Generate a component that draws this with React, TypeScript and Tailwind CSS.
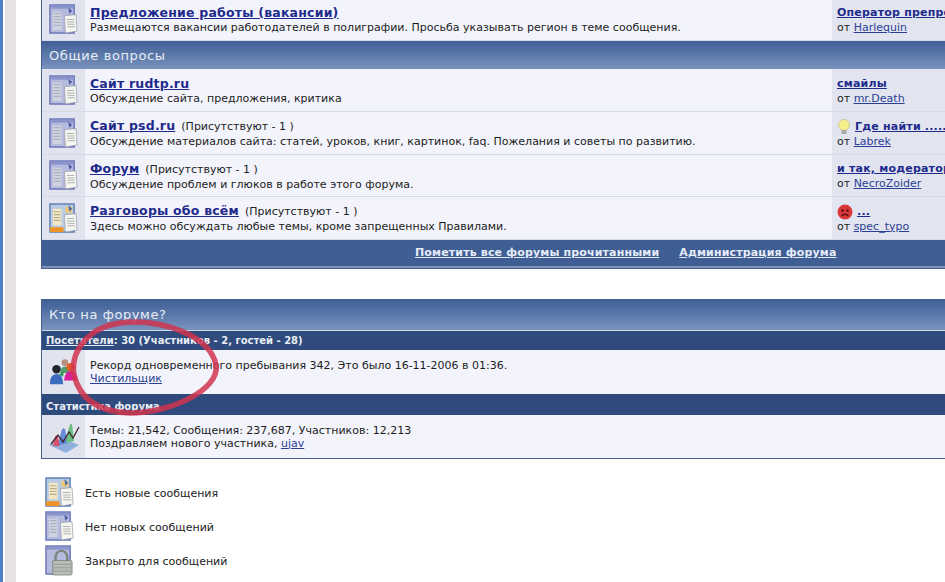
import React from 'react';

type IconProps = { className?: string };

const PaperSheet = ({ x = 15, y = 11 }: { x?: number; y?: number }) => (
  <g transform={`translate(${x} ${y})`}>
    <path d="M1 1 L13 0 L14 17 L2 19 Z" fill="#f6f6f0" stroke="#9497a6" strokeWidth="0.7" />
    <path d="M3.500 5 H11 M3.500 7.500 H11.500 M4 10 H11.500 M4 12.500 H12" stroke="#b0b3b4" strokeWidth="1.100" />
  </g>
);

// синяя папка с листом: нет новых сообщений
const FolderIcon = ({ className }: IconProps) => (
  <svg viewBox="0 0 30 32" className={className}>
    <rect x="1" y="1" width="25" height="29" fill="#b4bbdc" stroke="#6a74b8" strokeWidth="1.500" />
    <rect x="1.800" y="1.800" width="23.400" height="3" fill="#8a95cc" />
    <path d="M4 8 H13 V27 H4 Z" fill="#d0d3e0" />
    <path d="M5 10 H12 M5 13 H12 M5 16 H12 M5 19 H12 M5 22 H12" stroke="#acafc2" strokeWidth="1.200" />
    <path d="M20 4 L24 7 L21 10 Z" fill="#4c5aa0" />
    <PaperSheet />
  </svg>
);

// папка с оранжевым уголком: есть новые сообщения
const NewFolderIcon = ({ className }: IconProps) => (
  <svg viewBox="0 0 30 32" className={className}>
    <rect x="1" y="1" width="25" height="29" fill="#b8cbe2" stroke="#5d7fb4" strokeWidth="1.500" />
    <path d="M4 6 H13 V23 H4 Z" fill="#f2e8c8" />
    <path d="M5 9 H12 M5 12 H12 M5 15 H12 M5 18 H12" stroke="#b6ab8c" strokeWidth="1.200" />
    <path d="M1 25 H15 V30 H1 Z" fill="#ef9326" />
    <path d="M17 4 H24 V10 H17 Z" fill="#ecc876" />
    <path d="M20 2 L24 6 L21 9 Z" fill="#4b6aa5" />
    <PaperSheet />
  </svg>
);

const LockedIcon = ({ className }: IconProps) => (
  <svg viewBox="0 0 30 32" className={className}>
    <rect x="1" y="1" width="25" height="29" fill="#b4bbdc" stroke="#6a74b8" strokeWidth="1.500" />
    <rect x="1.800" y="1.800" width="23.400" height="3" fill="#8a95cc" />
    <path d="M11 17 V12 A6 6 0 0 1 23 12 V17" fill="none" stroke="#7d8580" strokeWidth="2.500" />
    <rect x="8" y="16" width="20" height="15" rx="1.500" fill="#b8bdb8" stroke="#767d77" strokeWidth="0.800" />
    <path d="M9 20 H27 M9 23.500 H27 M9 27 H27" stroke="#959b95" strokeWidth="1" />
  </svg>
);

const UsersIcon = ({ className }: IconProps) => (
  <svg viewBox="0 0 32 32" className={className}>
    <circle cx="17" cy="6" r="3.500" fill="#b78f7e" />
    <path d="M12 17 Q12 10 17 10 Q22 10 22 17 Z" fill="#4f9c6c" />
    <circle cx="8" cy="13" r="4.500" fill="#20242c" />
    <path d="M1 29 Q1 18 8 18 Q15 18 15 29 Z" fill="#3c6cc0" />
    <path d="M10 19 L16 15 L15 21 Z" fill="#2f9a58" />
    <circle cx="23" cy="11" r="4.500" fill="#e35c25" />
    <path d="M16 25 Q17 15 23 15 Q29 15 30 25 Z" fill="#d81f9a" />
  </svg>
);

const StatsIcon = ({ className }: IconProps) => (
  <svg viewBox="0 0 32 32" className={className}>
    <path d="M1 24 L14 17 L31 24 L18 32 Z" fill="#8fb0de" />
    <path d="M5 25 Q7 10 10 16 L12 25 Z" fill="#d8506a" />
    <path d="M11 24 Q13 4 17 8 L20 22 Z" fill="#5a80d8" opacity="0.900" />
    <path d="M18 22 Q21 0 24 3 L26 20 Z" fill="#6dbd82" />
    <path d="M3 23 L10 14 L15 21 L21 11 L25 17 L31 6" fill="none" stroke="#3a2a30" strokeWidth="1.300" />
  </svg>
);

const BulbIcon = () => (
  <svg viewBox="0 0 14 16" className="w-[14px] h-[16px] shrink-0">
    <circle cx="7" cy="6" r="5.500" fill="#f7f08a" stroke="#c9c8a2" />
    <rect x="4.500" y="11" width="5" height="4" fill="#a9a9a0" />
  </svg>
);

const SadIcon = () => (
  <svg viewBox="0 0 16 16" className="w-[16px] h-[16px] shrink-0">
    <circle cx="8" cy="8" r="7.500" fill="#d9383a" />
    <circle cx="5.500" cy="6.500" r="1.200" fill="#5a1010" />
    <circle cx="10.500" cy="6.500" r="1.200" fill="#5a1010" />
    <path d="M4.500 12 Q8 8.500 11.500 12" fill="none" stroke="#5a1010" strokeWidth="1.200" />
  </svg>
);

interface ForumRowProps {
  title: string;
  online?: boolean;
  desc: string;
  lastTitle: string;
  lastBy: string;
  lastIcon?: React.ReactNode;
  isNew?: boolean;
  height: string;
}

const ForumRow: React.FC<ForumRowProps> = ({ title, online, desc, lastTitle, lastBy, lastIcon, isNew, height }) => (
  <div className={`flex border-b border-[#d6d9e6] ${height}`}>
    <div className="w-[43px] shrink-0 flex items-center justify-center bg-[#e1e4ef]">
      {isNew ? <NewFolderIcon className="w-[29px] h-[31px]" /> : <FolderIcon className="w-[29px] h-[31px]" />}
    </div>
    <div className="w-[747px] shrink-0 flex flex-col justify-center pl-[5px] bg-[#f3f4fb]">
      <div className="flex items-baseline gap-[6px] leading-[16px]">
        <a className="text-[12.5px] font-bold tracking-[0.2px] text-[#1e2a8c] underline">{title}</a>
        {online && <span className="text-[11px] text-[#222]">(Присутствуют - 1 )</span>}
      </div>
      <p className="text-[11px] leading-[13px] text-[#1c1c1c] whitespace-nowrap">{desc}</p>
    </div>
    <div className="flex-1 flex flex-col justify-center pl-[5px] bg-[#e2e5f0] whitespace-nowrap">
      <div className="flex items-center gap-[4px] leading-[16px]">
        {lastIcon}
        <a className="text-[11px] font-bold tracking-[0.2px] text-[#1e2a8c] underline">{lastTitle}</a>
      </div>
      <p className="text-[11px] leading-[13px] text-[#1c1c1c]">
        от <a className="text-[#2c3f95] underline">{lastBy}</a>
      </p>
    </div>
  </div>
);

const LegendRow = ({ icon, label }: { icon: React.ReactNode; label: string }) => (
  <div className="flex items-center h-[34px]">
    <div className="w-[40px] shrink-0 -mt-[3px]">{icon}</div>
    <span className="text-[11px] text-[#222]">{label}</span>
  </div>
);

export default function App() {
  return (
    <div className="h-[582px] w-[945px] overflow-hidden flex bg-white font-['DejaVu_Sans',Verdana,sans-serif]">
      <div className="w-[3px] shrink-0 bg-[#4f7fc4]" />
      <div className="w-[2px] shrink-0 bg-white" />
      <div className="w-[11px] shrink-0 bg-[#e6e1e3]" />
      <div className="relative flex-1 pl-[25px] min-w-0">
        <div className="-mt-[2px] w-[1000px] border-x border-b border-[#46618f]">
          <ForumRow
            title="Предложение работы (вакансии)"
            desc="Размещаются вакансии работодателей в полиграфии. Просьба указывать регион в теме сообщения."
            lastTitle="Оператор препрес"
            lastBy="Harlequin"
            height="h-[43px]"
          />
          <div className="h-[28px] flex items-center pt-[2px] pl-[7px] text-[13px] tracking-[0.6px] text-[#e8edf6] bg-gradient-to-b from-[#3f5f96] to-[#7a93bd]">
            Общие вопросы
          </div>
          <ForumRow
            title="Сайт rudtp.ru"
            desc="Обсуждение сайта, предложения, критика"
            lastTitle="смайлы"
            lastBy="mr.Death"
            height="h-[43px]"
          />
          <ForumRow
            title="Сайт psd.ru"
            online
            desc="Обсуждение материалов сайта: статей, уроков, книг, картинок, faq. Пожелания и советы по развитию."
            lastTitle="Где найти ......"
            lastBy="Labrek"
            lastIcon={<BulbIcon />}
            height="h-[43px]"
          />
          <ForumRow
            title="Форум"
            online
            desc="Обсуждение проблем и глюков в работе этого форума."
            lastTitle="и так, модератор"
            lastBy="NecroZoider"
            height="h-[42px]"
          />
          <ForumRow
            title="Разговоры обо всём"
            online
            isNew
            desc="Здесь можно обсуждать любые темы, кроме запрещенных Правилами."
            lastTitle="..."
            lastBy="spec_typo"
            lastIcon={<SadIcon />}
            height="h-[43px]"
          />
          <div className="h-[28px] flex items-center pl-[373px] gap-[20px] text-[11px] font-bold tracking-[0.15px] text-[#e6ecf7] bg-[#3f5e94] border-b-2 border-[#8295b4]">
            <a className="underline">Пометить все форумы прочитанными</a>
            <a className="underline">Администрация форума</a>
          </div>
        </div>

        <div className="mt-[30px] w-[1000px] border-x border-y border-[#46618f]">
          <div className="h-[31px] flex items-center pl-[7px] text-[13px] tracking-[0.6px] text-[#e8edf6] bg-gradient-to-b from-[#3f5f96] to-[#7a93bd] border-b border-[#cfd8e8]">
            Кто на форуме?
          </div>
          <div className="h-[19px] flex items-center pl-[4px] text-[10px] font-bold text-[#e8edf6] bg-[#2f4a7c]">
            <a className="underline">Посетители</a>: 30 (Участников - 2, гостей - 28)
          </div>
          <div className="flex h-[44px]">
            <div className="w-[43px] shrink-0 flex items-center justify-center bg-[#e1e4ef]">
              <UsersIcon className="w-[30px] h-[30px]" />
            </div>
            <div className="flex-1 flex flex-col justify-center pl-[5px] bg-[#f3f4fb] text-[11px] leading-[13px] text-[#1c1c1c]">
              <p>Рекорд одновременного пребывания 342, Это было 16-11-2006 в 01:36.</p>
              <a className="text-[#2c3f95] underline">Чистильщик</a>
            </div>
          </div>
          <div className="h-[21px] flex items-center pt-[3px] pl-[4px] text-[10px] font-bold text-[#e8edf6] bg-[#2f4a7c]">
            Статистика форума
          </div>
          <div className="flex h-[43px]">
            <div className="w-[43px] shrink-0 flex items-center justify-center bg-[#e1e4ef]">
              <StatsIcon className="w-[32px] h-[32px]" />
            </div>
            <div className="flex-1 flex flex-col justify-center pl-[5px] bg-[#f3f4fb] text-[11px] leading-[13px] text-[#1c1c1c]">
              <p>Темы: 21,542, Сообщения: 237,687, Участников: 12,213</p>
              <p>
                Поздравляем нового участника, <a className="text-[#2c3f95] underline">ujav</a>
              </p>
            </div>
          </div>
        </div>

        <div className="mt-[18px] pl-[4px] flex flex-col">
          <LegendRow icon={<NewFolderIcon className="w-[29px] h-[31px]" />} label="Есть новые сообщения" />
          <LegendRow icon={<FolderIcon className="w-[29px] h-[31px]" />} label="Нет новых сообщений" />
          <LegendRow icon={<LockedIcon className="w-[29px] h-[31px]" />} label="Закрыто для сообщений" />
        </div>

        {/* красный овал поверх блока */}
        <svg viewBox="0 0 180 105" className="absolute left-[44px] top-[315px] w-[180px] h-[105px] pointer-events-none">
          <path
            d="M14 60 C10 35 30 12 60 8 C100 3 150 20 156 50 C160 75 110 98 70 98 C40 97 20 85 14 60 Z"
            fill="none"
            stroke="#d0344f"
            strokeOpacity="0.850"
            strokeWidth="5.500"
          />
        </svg>
      </div>
    </div>
  );
}
